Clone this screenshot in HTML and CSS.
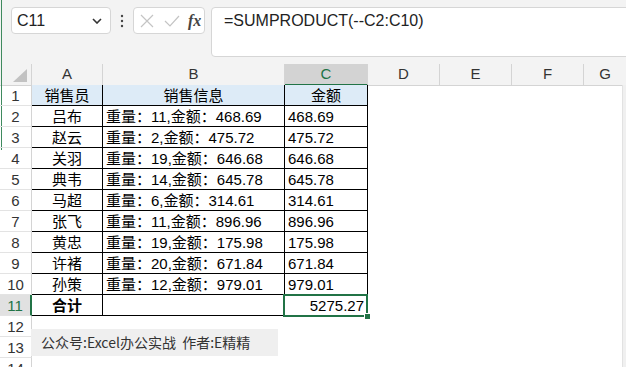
FILE: index.html
```html
<!DOCTYPE html>
<html lang="zh-CN">
<head>
  <meta charset="UTF-8" />
  <title>SUMPRODUCT</title>
  <link rel="stylesheet" href="styles.css">
</head>
<body>
  <div class="app">
    <div class="edge"></div>
    <div class="toolbar">
      <div class="namebox">
        <span>C11</span>
        <svg width="10" height="6" viewBox="0 0 10 6"><path d="M1 1 L5 5 L9 1" fill="none" stroke="#333" stroke-width="1.6"/></svg>
      </div>
      <div class="dots">
        <svg width="4" height="14" viewBox="0 0 4 14"><circle cx="2" cy="2" r="1.2" fill="#444"/><circle cx="2" cy="7" r="1.2" fill="#444"/><circle cx="2" cy="12" r="1.2" fill="#444"/></svg>
      </div>
      <div class="fxbox">
        <svg width="14" height="14" viewBox="0 0 14 14"><path d="M1 1 L13 13 M13 1 L1 13" stroke="#c4c4c4" stroke-width="1.2"/></svg>
        <svg width="16" height="12" viewBox="0 0 16 12"><path d="M1 6 L6 11 L15 1" fill="none" stroke="#c4c4c4" stroke-width="1.2"/></svg>
        <span class="fx">fx</span>
      </div>
      <div class="formula">=SUMPRODUCT(--C2:C10)</div>
    </div>

    <div class="colheads">
      <div class="corner"><svg width="14" height="13" viewBox="0 0 14 13"><polygon points="14,0 14,13 0,13" fill="#c2c2c2"/></svg></div>
      <div class="ch">A</div>
      <div class="ch">B</div>
      <div class="ch active">C</div>
      <div class="ch">D</div>
      <div class="ch">E</div>
      <div class="ch">F</div>
      <div class="ch last">G</div>
    </div>

    <div class="sheet">
      <div class="grid">
        <div class="rh">1</div><div class="c t head center">销售员</div><div class="c t head center">销售信息</div><div class="c t head center">金额</div><div></div><div></div><div></div><div></div>
        <div class="rh">2</div><div class="c t center">吕布</div><div class="c t">重量：11,金额：468.69</div><div class="c t">468.69</div><div></div><div></div><div></div><div></div>
        <div class="rh">3</div><div class="c t center">赵云</div><div class="c t">重量：2,金额：475.72</div><div class="c t">475.72</div><div></div><div></div><div></div><div></div>
        <div class="rh">4</div><div class="c t center">关羽</div><div class="c t">重量：19,金额：646.68</div><div class="c t">646.68</div><div></div><div></div><div></div><div></div>
        <div class="rh">5</div><div class="c t center">典韦</div><div class="c t">重量：14,金额：645.78</div><div class="c t">645.78</div><div></div><div></div><div></div><div></div>
        <div class="rh">6</div><div class="c t center">马超</div><div class="c t">重量：6,金额：314.61</div><div class="c t">314.61</div><div></div><div></div><div></div><div></div>
        <div class="rh">7</div><div class="c t center">张飞</div><div class="c t">重量：11,金额：896.96</div><div class="c t">896.96</div><div></div><div></div><div></div><div></div>
        <div class="rh">8</div><div class="c t center">黄忠</div><div class="c t">重量：19,金额：175.98</div><div class="c t">175.98</div><div></div><div></div><div></div><div></div>
        <div class="rh">9</div><div class="c t center">许褚</div><div class="c t">重量：20,金额：671.84</div><div class="c t">671.84</div><div></div><div></div><div></div><div></div>
        <div class="rh">10</div><div class="c t center">孙策</div><div class="c t">重量：12,金额：979.01</div><div class="c t">979.01</div><div></div><div></div><div></div><div></div>
        <div class="rh active">11</div><div class="c t center bold">合计</div><div class="c t"></div><div class="c t right">5275.27</div><div></div><div></div><div></div><div></div>
        <div class="rh">12</div><div></div><div></div><div></div><div></div><div></div><div></div><div></div>
        <div class="rh">13</div><div></div><div></div><div></div><div></div><div></div><div></div><div></div>
        <div class="rh">14</div><div></div><div></div><div></div><div></div><div></div><div></div><div></div>
      </div>
      <div class="vscroll"></div>

      <div class="note">公众号:Excel办公实战&nbsp;&nbsp;作者:E精精</div>
      <div class="selection"></div>
      <div class="handle"></div>
    </div>
  </div>
</body>
</html>
```

FILE: styles.css
```css
body {
  margin: 0;
  background: #fff;
  font-family: "Liberation Sans", "Noto Sans CJK SC", sans-serif;
  color: #000;
}
.app {
  position: relative;
  width: 626px;
  height: 367px;
  overflow: hidden;
}
.edge {
  position: absolute;
  left: 1px;
  top: 0;
  width: 1px;
  height: 150px;
  background: #3f8a5e;
}

/* formula bar */
.toolbar {
  height: 64px;
  box-sizing: border-box;
  padding-top: 7px;
  background: #f3f3f3;
  display: flex;
  align-items: flex-start;
}
.namebox, .fxbox, .formula {
  background: #fff;
  border: 1px solid #d6d6d6;
  border-radius: 4px;
  box-sizing: border-box;
}
.namebox {
  margin-left: 11px;
  width: 100px;
  height: 27px;
  display: flex;
  align-items: center;
  justify-content: space-between;
  padding: 0 8px 0 5px;
  font-size: 16px;
  color: #222;
}
.dots {
  width: 22px;
  height: 27px;
  display: flex;
  align-items: center;
  justify-content: center;
}
.fxbox {
  width: 72px;
  height: 27px;
  display: flex;
  align-items: center;
  gap: 10px;
  padding-left: 6px;
}
.fx {
  font-family: "Liberation Serif", serif;
  font-style: italic;
  font-weight: bold;
  font-size: 16px;
  color: #444;
  margin-left: -2px;
}
.formula {
  margin-left: 6px;
  flex: 1;
  height: 50px;
  margin-right: -6px;
  padding: 2px 0 0 12px;
  font-size: 16px;
  line-height: 22px;
  color: #222;
}

/* column headers */
.colheads {
  display: grid;
  grid-template-columns: 32px 71px 182px 83px 72px 72px 72px 1fr;
  height: 21px;
  background: #f3f3f3;
}
.colheads > div {
  box-sizing: border-box;
  border-right: 1px solid #d4d4d4;
  border-bottom: 1px solid #d4d4d4;
}
.corner {
  display: flex;
  align-items: flex-end;
  justify-content: flex-end;
  padding: 0 4px 3px 0;
}
.ch {
  text-align: center;
  font-size: 15px;
  line-height: 20px;
  color: #333;
}
.ch.active {
  background: #d3d3d3;
  color: #217346;
  border-bottom: 2px solid #217346;
}
.ch.last {
  border-right: none;
}

/* sheet */
.sheet {
  position: relative;
  display: flex;
}
.grid {
  width: 622px;
  display: grid;
  grid-template-columns: 32px 71px 182px 83px 72px 72px 72px 1fr;
  grid-auto-rows: 21px;
}
.vscroll {
  flex: 1;
  background: #f0f0f0;
  border-left: 1px solid #e2e2e2;
}
.rh {
  box-sizing: border-box;
  border-right: 1px solid #d4d4d4;
  border-bottom: 1px solid #e3e3e3;
  text-align: center;
  font-size: 15px;
  line-height: 21px;
  color: #333;
}
.rh.active {
  background: #e1e1e1;
  color: #217346;
  border-right: 2px solid #217346;
}
.c {
  box-sizing: border-box;
  padding: 0 3px;
  font-size: 15px;
  line-height: 21px;
  white-space: nowrap;
  overflow: hidden;
}
.t {
  border-right: 1px solid #000;
  border-bottom: 1px solid #000;
}
.head {
  background: #ddebf7;
}
.center { text-align: center; }
.right { text-align: right; }
.bold { font-weight: bold; }

.note {
  position: absolute;
  left: 31px;
  top: 244px;
  width: 247px;
  height: 27px;
  box-sizing: border-box;
  padding-left: 10px;
  background: #efefef;
  font-family: "Noto Sans CJK SC", sans-serif;
  font-size: 14px;
  line-height: 27px;
  color: #333;
}
.selection {
  position: absolute;
  left: 283px;
  top: 209px;
  width: 85px;
  height: 23px;
  box-sizing: border-box;
  border: 2px solid #217346;
}
.handle {
  position: absolute;
  left: 364px;
  top: 228px;
  width: 5px;
  height: 5px;
  background: #217346;
  border: 1px solid #fff;
}
```
